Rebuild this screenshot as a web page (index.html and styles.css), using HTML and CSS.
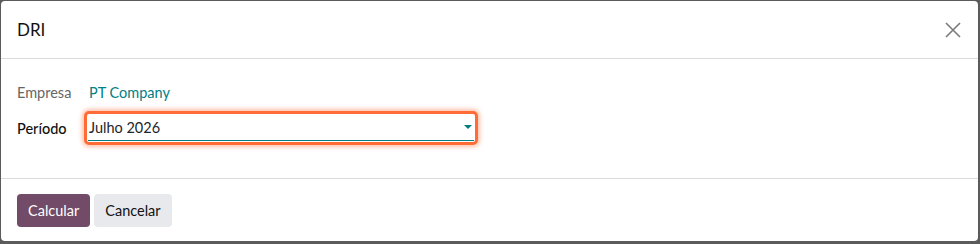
FILE: index.html
```html
<!DOCTYPE html>
<html lang="pt">
<head>
    <meta charset="UTF-8">
    <title>DRI</title>
    <link rel="stylesheet" href="styles.css">
</head>
<body>
    <div class="modal">
        <div class="modal-header">
            <h4 class="modal-title">DRI</h4>
            <button class="btn-close" aria-label="Fechar">
                <svg width="16" height="16" viewBox="0 0 16 16"><path d="M1 1 L15 15 M15 1 L1 15" stroke="#7a7a7a" stroke-width="1.6" fill="none"/></svg>
            </button>
        </div>
        <div class="modal-body">
            <div class="field">
                <label class="label muted">Empresa</label>
                <a class="link">PT Company</a>
            </div>
            <div class="field">
                <label class="label">Período</label>
                <div class="select-wrap">
                    <div class="select">
                        <span>Julho 2026</span>
                        <span class="caret"></span>
                    </div>
                </div>
            </div>
        </div>
        <div class="modal-footer">
            <button class="btn btn-primary">Calcular</button>
            <button class="btn btn-secondary">Cancelar</button>
        </div>
    </div>
</body>
</html>
```

FILE: styles.css
```css
html, body {
    margin: 0;
    height: 100%;
}
body {
    background-color: #5b5b5b;
    font-family: Lato, "Noto Sans", sans-serif;
    font-size: 14.5px;
    color: #212529;
    padding: 1px;
    box-sizing: border-box;
}
.modal {
    background: #fff;
    border-radius: 4px;
    height: 240px;
    width: 977px;
    display: flex;
    flex-direction: column;
}
.modal-header {
    height: 57px;
    border-bottom: 1px solid #d8dadd;
    display: flex;
    align-items: center;
    justify-content: space-between;
    padding: 0 16px;
}
.modal-title {
    margin: 0;
    font-size: 17px;
    font-weight: 400;
    color: #111;
}
.btn-close {
    border: none;
    background: none;
    padding: 0;
    margin-right: 1px;
    display: flex;
}
.modal-body {
    padding: 25px 16px 0;
    height: 94px;
}
.field {
    display: flex;
    align-items: center;
    margin-bottom: 10px;
}
.label {
    width: 72px;
    font-weight: 500;
    color: #111;
}
.label.muted {
    font-weight: 400;
    color: #666;
}
.link {
    color: #017e84;
}
.select-wrap {
    margin-left: -5px;
    border: 3px solid #ff6c37;
    border-radius: 5px;
    box-shadow: 0 0 4px 2px rgba(255, 120, 70, 0.45);
    width: 388px;
    background: #fff;
}
.select {
    display: flex;
    align-items: center;
    justify-content: space-between;
    height: 26px;
    padding: 0 2px 0 1px;
    border-bottom: 1px solid #017e84;
    margin: 0 1px 1px;
}
.caret {
    width: 0;
    height: 0;
    border-left: 4px solid transparent;
    border-right: 4px solid transparent;
    border-top: 4px solid #017e84;
}
.modal-footer {
    border-top: 1px solid #d8dadd;
    flex: 1;
    display: flex;
    align-items: center;
    gap: 4px;
    padding: 0 16px;
}
.btn {
    font-family: inherit;
    font-size: 14.5px;
    border: none;
    border-radius: 4px;
    height: 33px;
    padding: 0 11px;
}
.btn-primary {
    background: #714b67;
    color: #fff;
}
.btn-secondary {
    background: #e7e9ed;
    color: #111;
}
```
